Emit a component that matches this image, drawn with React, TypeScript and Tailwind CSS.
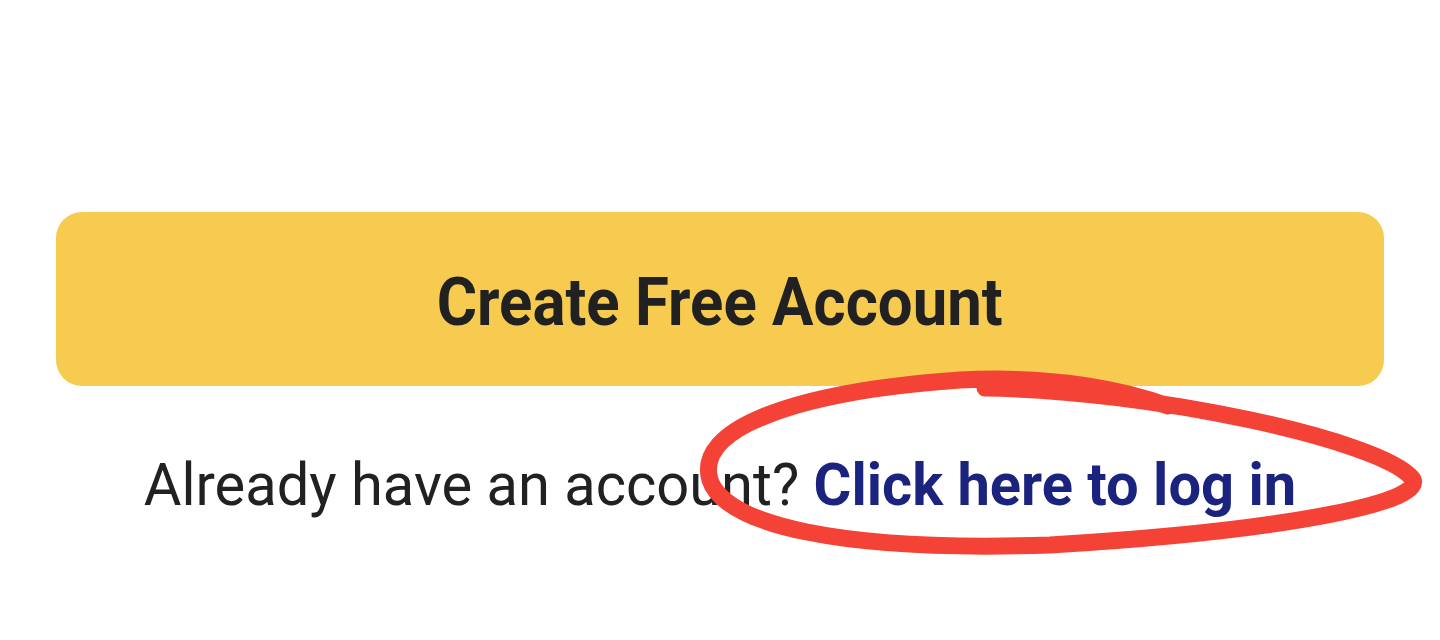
export default function App() {
  return (
    <div
      className="relative w-[1440px] h-[640px] overflow-hidden bg-white"
      style={{ fontFamily: 'Roboto, "Noto Sans", sans-serif' }}
    >
      <div className="flex flex-col items-center px-[56px] pt-[212px]">
        <button className="flex h-[174px] w-full items-center justify-center rounded-[26px] bg-[#F6CB50] pt-[7px]">
          <span className="inline-block scale-x-[0.935] whitespace-nowrap text-[66px] font-bold leading-none text-[#212121]">
            Create Free Account
          </span>
        </button>

        <p className="mt-[69px] inline-block scale-x-[0.98] whitespace-nowrap text-[59px] leading-none text-[#212121]">
          Already have an account?{' '}
          <a href="#" className="font-bold text-[#1A237E]">
            Click here to log in
          </a>
        </p>
      </div>

      {/* hand-drawn highlight */}
      <svg
        className="pointer-events-none absolute left-0 top-0"
        width="1440"
        height="640"
        viewBox="0 0 1440 640"
        fill="none"
      >
        <path
          d="M985 388 C1150 390 1380 440 1412 478 C1430 500 1300 530 1050 545 C840 552 725 525 710 480 C695 430 790 392 960 380 C1060 375 1130 392 1168 406"
          stroke="#F44336"
          strokeWidth="17"
          strokeLinecap="round"
          strokeLinejoin="round"
        />
      </svg>
    </div>
  )
}
